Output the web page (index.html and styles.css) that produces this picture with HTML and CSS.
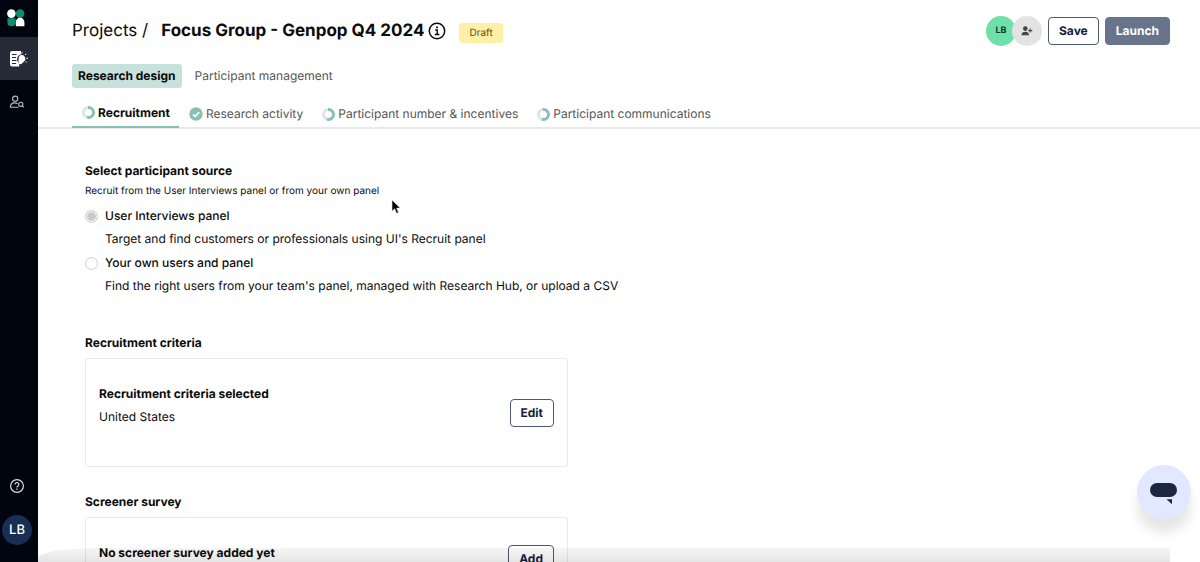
FILE: index.html
```html
<!DOCTYPE html>
<html lang="en">
<head>
<meta charset="utf-8">
<meta name="viewport" content="width=device-width, initial-scale=1">
<title>Focus Group - Genpop Q4 2024</title>
<link rel="stylesheet" href="styles.css">
</head>
<body>
<div class="app">
  <nav class="sidebar" aria-label="Main">
    <a class="side-logo" href="#" aria-label="Home">
      <svg width="18" height="18" viewBox="0 0 18 18">
        <circle cx="4.4" cy="4.6" r="4.3" fill="#fff"/>
        <circle cx="13.1" cy="4.6" r="4.3" fill="#128a6c"/>
        <path d="M0.4 9.2h8.2v4a4.1 4.1 0 0 1-8.2 0z" fill="#128a6c"/>
        <path d="M8.8 17.3v-4.2a4.3 4.3 0 0 1 8.6 0v4.2z" fill="#fff"/>
      </svg>
    </a>
    <a class="side-item side-active" href="#" aria-label="Projects">
      <svg width="20" height="18" viewBox="0 0 20 18">
        <path d="M3 1h9v3.2a5 5 0 0 0-3 7.8l1.2 1.8v2.7H3a2 2 0 0 1-2-2V3a2 2 0 0 1 2-2z" fill="#fff"/>
        <path d="M3 4.5h4.5M3 7.5h4M3 10.5h4.5M3 13.5h4" stroke="#252b36" stroke-width="1"/>
        <path d="M12.5 4.8a3.9 3.9 0 0 1 2.3 7l-2.7 2.4-2.2-.5-.5-2.2.3-2.7a3.9 3.9 0 0 1 2.8-4z" fill="#fff"/>
        <path d="M13 3.6V2M16 5l1.2-1.3M17.3 8.3h1.6M16.5 11.4l1.2 1" stroke="#fff" stroke-width="1"/>
      </svg>
    </a>
    <a class="side-item" href="#" aria-label="Participants">
      <svg width="16" height="14" viewBox="0 0 16 14" fill="none" stroke="#b9bdc4" stroke-width="1.1">
        <circle cx="6.2" cy="3.7" r="2.6"/>
        <path d="M9.6 12.3H1.4c0-2.8 1.8-4.4 4.4-4.4 1.1 0 2 .3 2.7.8"/>
        <circle cx="11.8" cy="9.3" r="2.1"/>
        <path d="M13.3 10.8l1.4 1.6"/>
      </svg>
    </a>
    <div class="side-foot">
      <a class="side-help" href="#" aria-label="Help">
        <svg width="16" height="16" viewBox="0 0 16 16" fill="none" stroke="#d9dbdf" stroke-width="1.2">
          <circle cx="8" cy="8" r="6.4"/>
          <path d="M6.1 6.5a1.9 1.9 0 1 1 2.9 1.6c-.6.4-1 .7-1 1.3"/>
          <path d="M8 10.6v1.2" stroke-width="1.4"/>
        </svg>
      </a>
      <button class="side-user" type="button">LB</button>
    </div>
  </nav>

  <div class="page">
    <header class="top">
      <div class="title-row">
        <a class="crumb" href="#">Projects /</a>
        <h1 class="title">Focus Group - Genpop Q4 2024</h1>
        <svg class="info" width="18" height="18" viewBox="0 0 18 18" fill="none" stroke="#0b0b0b" role="img" aria-label="Info">
          <circle cx="9" cy="9" r="7.7" stroke-width="1.5"/>
          <path d="M7.2 8h2v4.4M6.8 12.5h4.6" stroke-width="1.4"/>
          <path d="M9 4.6v1.7" stroke-width="1.8"/>
        </svg>
        <span class="badge">Draft</span>
        <div class="actions">
          <div class="people">
            <span class="person">LB</span>
            <button class="person person-add" type="button" aria-label="Add collaborator">
              <svg width="12" height="10" viewBox="0 0 12 10" fill="#444">
                <circle cx="4.3" cy="2.6" r="2.3"/>
                <path d="M.5 9.2c0-2.3 1.5-3.4 3.8-3.4s3.7 1.1 3.7 3.4z"/>
                <path d="M9.2 2.6v4M7.3 4.6h4" stroke="#444" stroke-width="1.1"/>
              </svg>
            </button>
          </div>
          <button class="btn" type="button">Save</button>
          <button class="btn btn-launch" type="button">Launch</button>
        </div>
      </div>
      <nav class="sections" aria-label="Project sections">
        <a class="section section-on" href="#">Research design</a>
        <a class="section" href="#">Participant management</a>
      </nav>
      <nav class="tabs" aria-label="Steps">
        <a class="tab tab-on" href="#"><span class="ring"></span>Recruitment</a>
        <a class="tab" href="#">
          <svg width="14" height="14" viewBox="0 0 14 14"><circle cx="7" cy="7" r="6.7" fill="#86c2b4"/><path d="M4 7.3l2.2 2.2L10.2 5" fill="none" stroke="#fff" stroke-width="1.7"/></svg>Research activity</a>
        <a class="tab" href="#"><span class="ring"></span>Participant number &amp; incentives</a>
        <a class="tab" href="#"><span class="ring"></span>Participant communications</a>
      </nav>
    </header>

    <main class="content">
      <fieldset class="source">
        <legend class="heading">Select participant source</legend>
        <p class="hint">Recruit from the User Interviews panel or from your own panel</p>
        <div class="option">
          <input class="radio" type="radio" name="source" id="src-ui" checked>
          <label class="option-label" for="src-ui">User Interviews panel</label>
          <p class="option-text">Target and find customers or professionals using UI's Recruit panel</p>
        </div>
        <div class="option">
          <input class="radio" type="radio" name="source" id="src-own">
          <label class="option-label" for="src-own">Your own users and panel</label>
          <p class="option-text">Find the right users from your team's panel, managed with Research Hub, or upload a CSV</p>
        </div>
      </fieldset>

      <section class="block">
        <h2 class="heading">Recruitment criteria</h2>
        <div class="card">
          <div class="card-body">
            <h3 class="heading">Recruitment criteria selected</h3>
            <p class="card-text">United States</p>
          </div>
          <button class="btn btn-card" type="button">Edit</button>
        </div>
      </section>

      <section class="block">
        <h2 class="heading">Screener survey</h2>
        <div class="card">
          <h3 class="heading">No screener survey added yet</h3>
          <button class="btn btn-card" type="button">Add</button>
        </div>
      </section>
    </main>
    <div class="shade"></div>
  </div>

  <button class="chat" type="button" aria-label="Open chat">
    <svg width="28" height="22" viewBox="0 0 28 22" fill="#1d2641">
      <rect x="0" y="0" width="27" height="14" rx="7"/>
      <path d="M16.5 16.3H22v5z"/>
    </svg>
  </button>

  <svg class="pointer" width="10" height="16" viewBox="0 0 10 16">
    <path d="M1 1v11.3l2.7-2.5 1.8 4.5 2-.8-1.9-4.4h3.6z" fill="#000" stroke="#e6e6e6" stroke-width=".6"/>
  </svg>
</div>
</body>
</html>
```
FILE: styles.css
```css
* { box-sizing: border-box; }

body {
  margin: 0;
  font-family: Inter, "Liberation Sans", sans-serif;
  font-size: 12px;
  line-height: 16px;
  text-rendering: geometricPrecision;
  color: #0b0b0b;
  background: #fff;
}

h1, h2, h3, p { margin: 0; }
a { color: inherit; text-decoration: none; }
button { font: inherit; text-rendering: inherit; padding: 0; border: 0; cursor: pointer; }
svg { display: block; flex: none; }

.app {
  position: relative;
  display: flex;
  height: 100vh;
  overflow: hidden;
}

/* Sidebar */
.sidebar {
  flex: none;
  width: 38px;
  display: flex;
  flex-direction: column;
  background: #00050f;
}
.side-logo {
  height: 37px;
  padding: 9px 0 0 7px;
}
.side-item {
  height: 43px;
  display: flex;
  align-items: center;
  padding-left: 9px;
}
.side-active { background: #252b36; }
.side-foot {
  margin-top: auto;
  padding: 0 0 17px 2px;
  width: 32px;
  display: flex;
  flex-direction: column;
  align-items: center;
  gap: 21px;
}
.side-user {
  width: 30px;
  height: 30px;
  border-radius: 50%;
  background: #182e52;
  color: #fff;
  font-size: 13px;
  font-weight: 500;
}

/* Header */
.page {
  position: relative;
  flex: 1;
  min-width: 0;
}
.top {
  padding: 16px 30px 0 34px;
  border-bottom: 2px solid #e9e9e9;
}
.title-row {
  display: flex;
  align-items: center;
  height: 30px;
}
.crumb, .title {
  font-size: 17px;
  line-height: 24px;
}
.crumb { margin-right: 13px; }
.title { font-weight: 700; }
.info { margin: 0 13px 0 4px; }
.badge {
  margin-top: 3px;
  padding: 2px 10px;
  border-radius: 3px;
  background: #fff0a5;
  color: #574f1e;
  font-size: 10px;
}
.actions {
  margin-left: auto;
  display: flex;
  align-items: center;
  gap: 6px;
}
.people { display: flex; }
.person {
  width: 30px;
  height: 30px;
  border-radius: 50%;
  display: flex;
  align-items: center;
  justify-content: center;
  background: #6fe0a9;
  color: #10402a;
  font-size: 9px;
  font-weight: 700;
}
.person-add {
  margin-left: -4px;
  background: #e3e3e3;
}
.btn {
  height: 28px;
  padding: 0 10px;
  border: 1px solid #4a5875;
  border-radius: 4px;
  background: #fff;
  color: #14213f;
  font-weight: 700;
}
.btn-launch {
  border-color: #68748c;
  background: #68748c;
  color: #fff;
}

.sections {
  display: flex;
  gap: 7px;
  margin-top: 18px;
}
.section {
  padding: 4px 6px;
  border-radius: 3px;
  color: #555;
}
.section-on {
  background: #c7e2dc;
  color: #0b0b0b;
  font-weight: 700;
}

.tabs {
  display: flex;
  margin-top: 13px;
}
.tab {
  display: flex;
  align-items: center;
  gap: 3px;
  height: 26px;
  padding: 0 9px 0 10px;
  color: #555;
}
.tab-on {
  height: 27px;
  margin-bottom: -1px;
  padding-bottom: 2px;
  border-bottom: 2px solid #86c2b4;
  color: #0b0b0b;
  font-weight: 700;
}
.ring {
  width: 13px;
  height: 13px;
  border-radius: 50%;
  background:
    radial-gradient(circle, #fff 0 3px, transparent 4px),
    conic-gradient(#86c2b4 0 54%, #e0e4e3 54% 100%);
}

/* Content */
.content { padding: 34px 47px; }
.source {
  margin: 0;
  padding: 0;
  border: 0;
  min-width: 0;
}
.heading {
  padding: 0;
  font-size: 12px;
  line-height: 16px;
  font-weight: 700;
}
.hint {
  margin: 4px 0 9px;
  font-size: 10px;
}
.option {
  display: grid;
  grid-template-columns: 13px 1fr;
  column-gap: 7px;
  row-gap: 7px;
  align-items: center;
  margin-bottom: 8px;
}
.option-label {
  justify-self: start;
  font-weight: 500;
}
.option-text { grid-column: 2; }
.radio {
  appearance: none;
  width: 13px;
  height: 13px;
  margin: 0;
  border: 1px solid #cfcfcf;
  border-radius: 50%;
  background: #fff;
}
.radio:checked {
  background: #cbcbcb;
  box-shadow: inset 0 0 0 1px #fff;
}

.block { margin-top: 27px; }
.source + .block { margin-top: 33px; }
.card {
  display: flex;
  justify-content: space-between;
  max-width: 483px;
  margin-top: 7px;
  padding: 27px 13px;
  border: 1px solid #e9e9e9;
  border-radius: 3px;
}
.card-body { padding-bottom: 14px; }
.card-text { margin-top: 7px; }
.btn-card { align-self: center; }

/* Overlays */
.shade {
  position: absolute;
  left: 0;
  right: 30px;
  bottom: 0;
  height: 14px;
  border-radius: 60px 0 0 0 / 10px 0 0 0;
  background: linear-gradient(rgba(0, 0, 0, .04), rgba(0, 0, 0, .1));
  pointer-events: none;
}
.chat {
  position: absolute;
  right: 9px;
  bottom: 43px;
  width: 54px;
  height: 54px;
  padding: 3px 0 0;
  display: flex;
  align-items: center;
  justify-content: center;
  border-radius: 50%;
  background: #e2e8ff;
  box-shadow: 0 14px 12px rgba(0, 0, 0, .1);
}
.pointer {
  position: absolute;
  left: 391px;
  top: 199px;
}
```
